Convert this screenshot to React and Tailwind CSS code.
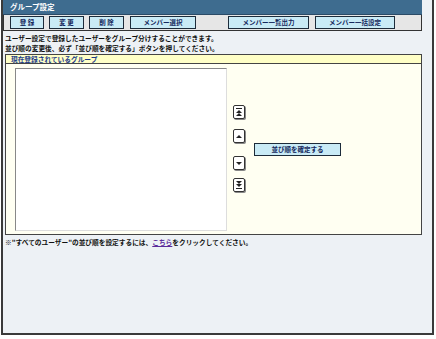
export default function App() {
  const jp = { fontFamily: '"Noto Sans CJK JP", "Noto Sans", sans-serif' };
  const btn =
    "h-[13px] bg-[#c9ebf6] border border-[#1c2b3a] flex items-center justify-center text-[6.5px] font-bold text-[#14285c] leading-none";
  const arrowBtn =
    "w-[12px] h-[14px] bg-white border border-[#333] rounded-[2px] flex flex-col items-center justify-center shadow-[1px_1px_0_#888]";
  const up = "w-0 h-0 border-l-[3px] border-r-[3px] border-b-[3px] border-l-transparent border-r-transparent border-b-[#222]";
  const down = "w-0 h-0 border-l-[3px] border-r-[3px] border-t-[3px] border-l-transparent border-r-transparent border-t-[#222]";
  return (
    <div className="w-[436px] h-[339px] bg-white" style={jp}>
      <div className="ml-[1px] w-[433px] h-[335px] border-l-2 border-r-2 border-b-2 border-[#3a3a3a] bg-[#edf1f5] flex flex-col">
        <div className="w-[419px] flex flex-col">
          <div className="h-[15px] bg-[#3e6c8f] flex items-center pl-[7px] border-b border-[#2a4a66]">
            <span className="text-white text-[7.5px] font-bold leading-none">グループ設定</span>
          </div>
          <div className="h-[16px] bg-[#e6e6e6] border border-[#333] border-t-0 flex items-center pl-[6px]">
            <div className={btn + " w-[34px]"}>登 録</div>
            <div className={btn + " w-[35px] ml-[5px]"}>変 更</div>
            <div className={btn + " w-[35px] ml-[5px]"}>削 除</div>
            <div className={btn + " w-[66px] ml-[6px]"}>メンバー選択</div>
            <div className={btn + " w-[81px] ml-[32px]"}>メンバー一覧出力</div>
            <div className={btn + " w-[80px] ml-[6px]"}>メンバー一括設定</div>
          </div>
          <div className="pl-[2px] pt-[2px] text-[6.7px] font-bold text-[#111] leading-[10px]">
            <div>ユーザー設定で登録したユーザーをグループ分けすることができます。</div>
            <div>並び順の変更後、必ず「並び順を確定する」ボタンを押してください。</div>
          </div>
          <div className="ml-[2px] mt-[1px] w-[417px]">
            <div className="h-[10px] bg-[#ffffc6] border border-[#444] flex items-center pl-[5px]">
              <span className="text-[6.7px] font-bold text-[#1a3a8c] leading-none">現在登録されているグループ</span>
            </div>
            <div className="h-[171px] bg-[#fffff2] border border-t-0 border-[#444] flex pl-[9px] pt-[4px]">
              <div className="w-[212px] h-[163px] bg-white border border-[#888] border-r-[#ddd] border-b-[#ddd]" />
              <div className="flex flex-col ml-[6px] pt-[37px]">
                <div className={arrowBtn}>
                  <div className="w-[6px] h-[1px] bg-[#222]" />
                  <div className={up + " mt-[1px]"} />
                  <div className={up} />
                </div>
                <div className={arrowBtn + " mt-[10px]"}>
                  <div className={up} />
                </div>
                <div className={arrowBtn + " mt-[13px]"}>
                  <div className={down} />
                </div>
                <div className={arrowBtn + " mt-[8px]"}>
                  <div className={down} />
                  <div className={down} />
                  <div className="w-[6px] h-[1px] bg-[#222] mt-[1px]" />
                </div>
              </div>
              <div className="ml-[9px] pt-[75px]">
                <div className={btn + " w-[87px] h-[12px]"}>並び順を確定する</div>
              </div>
            </div>
          </div>
          <div className="pl-[2px] pt-[2px] text-[6.7px] font-bold text-[#111] leading-[10px]">
            ※"すべてのユーザー"の並び順を設定するには、
            <span className="text-[#5b2a9a] underline">こちら</span>
            をクリックしてください。
          </div>
        </div>
      </div>
    </div>
  );
}
